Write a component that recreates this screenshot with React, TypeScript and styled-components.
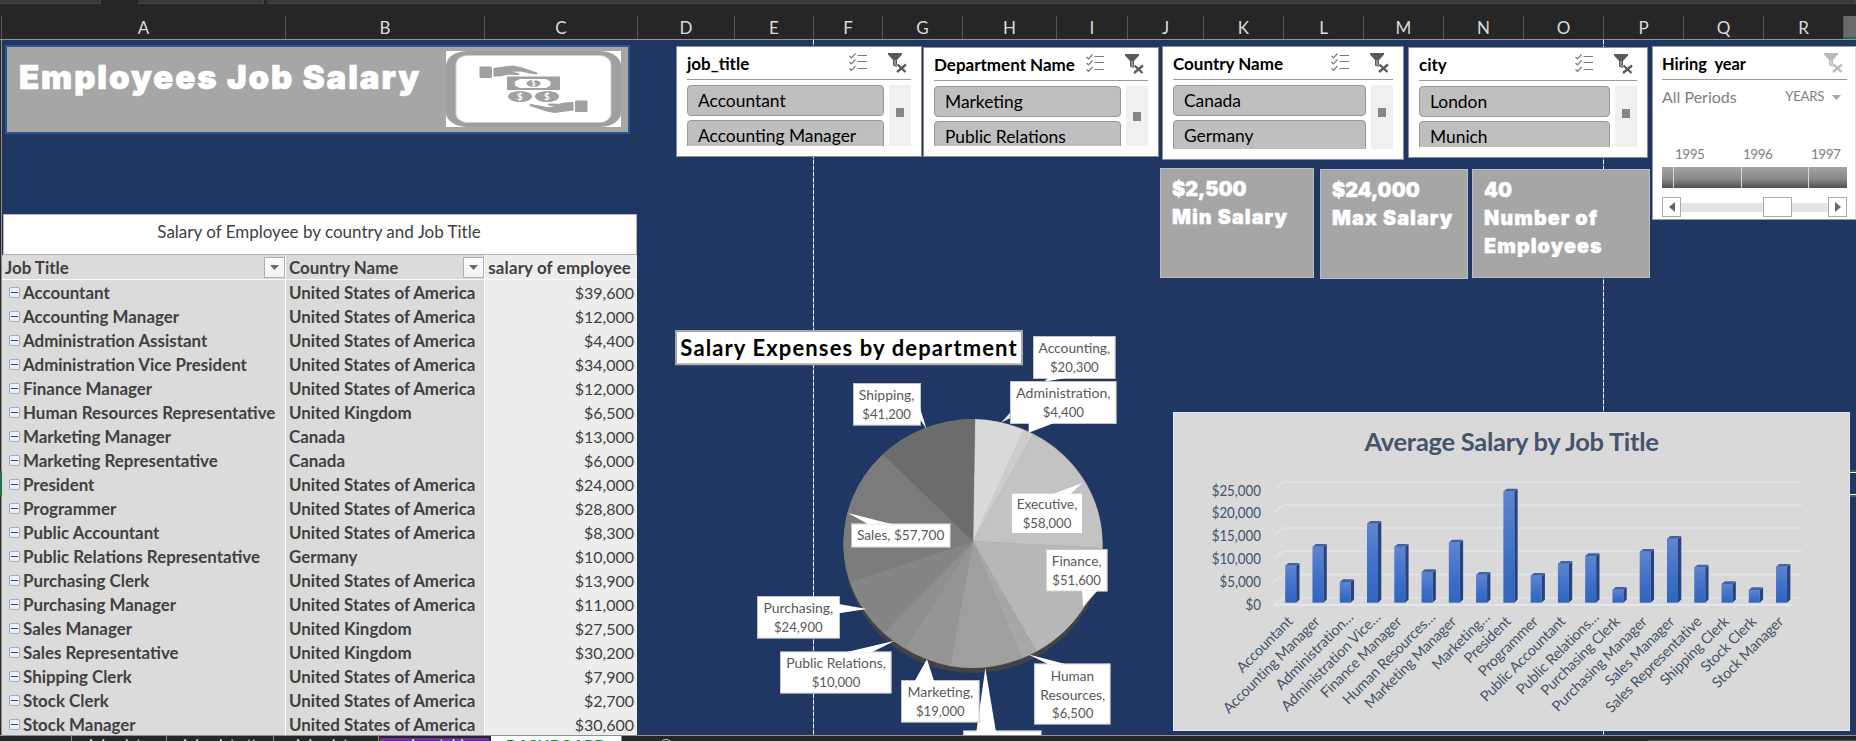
import React from "react";
import styled, { createGlobalStyle } from "styled-components";

const Global = createGlobalStyle`
  * { box-sizing: border-box; }
  html, body { margin: 0; padding: 0; background: #262626; overflow: hidden; }
  body { font-family: Lato, Carlito, "Liberation Sans", sans-serif; }
`;

const heavy = `Inter, "Liberation Sans", sans-serif`;

const Window = styled.div`
  width: 1856px; height: 741px; display: flex; flex-direction: column;
  background: #262626; overflow: hidden;
`;
const Ribbon = styled.div`
  height: 16px; flex: none; display: flex; align-items: flex-start;
`;
const RibbonPiece = styled.div<{ $w?: number; $gap: number }>`
  height: 4px; background: #383838; border-bottom: 1px solid #464646; border-right: 1px solid #464646;
  margin-right: ${p => p.$gap}px;
  ${p => (p.$w ? `width: ${p.$w}px;` : "flex: 1;")}
`;
const ColumnHeads = styled.div`
  height: 24px; flex: none; display: flex; border-bottom: 1px solid #929297; padding-left: 1px;
`;
const ColumnHead = styled.div<{ $w: number; $active?: boolean }>`
  width: ${p => p.$w}px; flex: none; display: flex; align-items: center; justify-content: center;
  border-left: 1px solid #55555a; color: #dcdcdc; font-size: 17px; line-height: 23px;
  ${p => p.$active && "background: #6a6a6a; border-bottom: 2px solid #217346;"}
`;
const Sheet = styled.div`
  position: relative; height: 695px; flex: none; display: flex; background: #203764; overflow: hidden;
`;
const RowHeads = styled.div`
  width: 2px; flex: none; background: #262626; border-right: 1px solid #8f8f94; padding-top: 431px;
`;
const ActiveRow = styled.div`width: 2px; height: 25px; background: #217346;`;
const PageBreak = styled.div<{ $x: number }>`
  position: absolute; top: 0; bottom: 0; left: ${p => p.$x}px; width: 1px;
  background: repeating-linear-gradient(180deg, #f2f2f2 0 4px, #7c89a3 4px 6px);
`;
const LeftColumn = styled.div`width: 636px; flex: none; display: flex; flex-direction: column;`;
const Banner = styled.div`
  margin: 5px 0 0 3px; width: 625px; height: 89px; flex: none; border: 2px solid #2f5597; background: #a6a6a6;
  display: flex; justify-content: space-between; padding: 4px 7px 0 12px;
`;
const BannerTitle = styled.h1`
  margin: 4px 0 0; width: 0; font: 900 33px/44px ${heavy}; color: #fff; letter-spacing: 1.9px; white-space: nowrap;
  -webkit-text-stroke: 0.7px #fff;
`;
const TableTitle = styled.div`
  margin: 80px 0 0 1px; width: 634px; height: 41px; flex: none; background: #fff; border: 1px solid #b5b5b5;
  text-align: center; color: #404040; font-size: 17px; line-height: 34px; padding-right: 2px;
`;
const Table = styled.div`
  display: grid; grid-template-columns: 284px 199px 152px; grid-template-rows: 25px; grid-auto-rows: 24px;
`;
const Cell = styled.div<{ $head?: boolean; $value?: boolean }>`
  display: flex; align-items: center; white-space: nowrap;
  color: #404040; font-size: ${p => (p.$value && !p.$head ? 16 : 16.9)}px;
  font-weight: ${p => (p.$value && !p.$head ? 400 : 700)};
  letter-spacing: ${p => (p.$value && p.$head ? 0.15 : 0)}px;
  background: ${p => (p.$value ? "#ededed" : "#dbdbdb")};
  border-right: ${p => (p.$value ? "none" : "1px solid #fff")};
  border-bottom: ${p => (p.$head ? "1px solid #fafafa" : "none")};
  justify-content: ${p => (p.$value ? "flex-end" : p.$head ? "space-between" : "flex-start")};
  padding: ${p => (p.$head ? 1 : 0)}px ${p => (p.$head && !p.$value ? 0 : p.$head ? 6 : 3)}px 0 3px;
`;
const DropButton = styled.span`
  width: 21px; height: 21px; border: 1px solid #aab0ba; background: linear-gradient(#fff, #f0f2f5);
  display: flex; align-items: center; justify-content: center;
`;
const Collapse = styled.span`
  width: 11px; height: 11px; margin: 0 3px 0 4px; flex: none; border: 1px solid #9aaac8; border-radius: 2px;
  background: #eef2f7; display: flex; align-items: center; justify-content: center;
  &::after { content: ""; width: 7px; height: 1px; background: #2d4a80; }
`;
const MiddleColumn = styled.div`
  position: relative; width: 522px; flex: none; display: flex; flex-direction: column;
`;
const SlicerRow = styled.div<{ $left: number; $gap: number; $h?: number }>`
  display: flex; align-items: flex-start; gap: ${p => p.$gap}px; padding: 6px 0 0 ${p => p.$left}px; flex: none;
  height: ${p => p.$h ?? 124}px;
`;
const SlicerPanel = styled.section<{ $w: number; $h: number; $drop: number }>`
  width: ${p => p.$w}px; height: ${p => p.$h}px; margin-top: ${p => p.$drop}px; flex: none; background: #fff;
  border: 1px solid #8c8c8c; padding: 0 10px 10px; display: flex; flex-direction: column;
`;
const PanelHead = styled.header<{ $size?: number }>`
  height: 33px; flex: none; display: flex; align-items: center; border-bottom: 1px solid #9a9a9a;
  color: #000; font-weight: 700; font-size: ${p => p.$size ?? 17}px; white-space: nowrap;
  & > span { flex: 1; width: 0; }
`;
const PanelIcons = styled.div`
  display: flex; gap: 20px; padding: 0 4px 0 0; flex: none;
`;
const SlicerBody = styled.div`
  flex: 1; min-height: 0; margin-top: 5px; display: flex; justify-content: space-between; overflow: hidden;
`;
const SlicerItems = styled.div`flex: 1; display: flex; flex-direction: column; gap: 4px; overflow: hidden;`;
const SlicerItem = styled.div`
  height: 31px; flex: none; border: 1px solid #979797; border-radius: 4px; background: #bfbfbf;
  padding-left: 10px; font-size: 17.4px; line-height: 30px; color: #000; white-space: nowrap;
`;
const SlicerScroll = styled.div<{ $thumb: number }>`
  width: 22px; margin-left: 5px; flex: none; background: #f0f0f0; padding: ${p => p.$thumb}px 0 0 7px;
  &::after { content: ""; display: block; width: 8px; height: 9px; background: #868686; }
`;
const RightColumn = styled.div`
  position: relative; width: 696px; flex: none; display: flex; flex-direction: column;
`;
const Upper = styled.div`display: flex; height: 372px; flex: none;`;
const Stack = styled.div`width: 490px; flex: none; display: flex; flex-direction: column;`;
const Cards = styled.div`display: flex; align-items: flex-start; padding-top: 4px;`;
const Card = styled.div<{ $w: number; $h: number; $drop: number; $gap: number; $pad: number }>`
  width: ${p => p.$w}px; height: ${p => p.$h}px; margin: ${p => p.$drop}px ${p => p.$gap}px 0 0; flex: none;
  background: #a6a6a6; border: 1px solid #b9bcc2; padding: 6px 0 0 ${p => p.$pad}px;
  color: #fff; font: 900 19.8px/28px ${heavy}; letter-spacing: 1.05px; white-space: nowrap;
  -webkit-text-stroke: 0.4px #fff;
`;
const CardValue = styled.div`letter-spacing: 0;`;
const Timeline = styled.section`
  width: 204px; height: 174px; margin: 6px 0 0 2px; flex: none; background: #fff; border: 1px solid #9b9b9b;
  border-right-color: #dedede; padding: 0 8px 0 9px; display: flex; flex-direction: column;
`;
const Period = styled.div`
  display: flex; align-items: center; color: #808080; font-size: 16px; height: 33px; flex: none; padding-bottom: 1px;
  & > b { margin-left: auto; font-size: 13.2px; font-weight: 400; letter-spacing: -0.3px; }
  & > svg { margin: 3px 6px 0 8px; }
`;
const Years = styled.div`
  margin-top: 28px; height: 24px; display: flex; gap: 40px; padding-left: 13px; font-size: 13.5px; line-height: 26px;
  color: #808080; letter-spacing: -0.5px; flex: none;
  & > span { width: 28px; white-space: nowrap; }
`;
const YearBar = styled.div`
  display: grid; grid-template-columns: 12px 68px 67px 38px; height: 21px; margin-top: 2px; flex: none;
  background: linear-gradient(#a2a2a2, #8a8a8a 55%, #505050);
  & > i { border-right: 1px solid #d8d8d8; } & > i:last-child { border: 0; }
`;
const Scrubber = styled.div`display: flex; align-items: center; margin-top: 9px; height: 20px; flex: none;`;
const Knob = styled.div<{ $w: number }>`
  width: ${p => p.$w}px; height: 20px; background: #fff; border: 1px solid #ababab; flex: none;
  display: flex; align-items: center; justify-content: center;
`;
const Track = styled.div<{ $w: number }>`width: ${p => p.$w}px; height: 9px; background: #e4e4e4; flex: none;`;
const BarPanel = styled.section`
  width: 677px; height: 319px; margin-left: 13px; flex: none; background: #d9d9d9; border: 1px solid #e4e8ee;
`;
const BarTitle = styled.h2`
  margin: 0; height: 60px; font-size: 25.5px; line-height: 57px; text-align: center; color: #44546a; font-weight: 700;
  letter-spacing: -0.28px;
`;
const RightEdge = styled.div`
  position: absolute; left: 1850px; top: 430px; width: 6px; height: 27px;
  border: solid #217346; border-width: 2px 0; box-shadow: inset 0 1px #fff, inset 0 -1px #fff;
`;
const TabBar = styled.footer`
  height: 6px; flex: none; display: flex; overflow: hidden; border-top: 1px solid #8f8f94;
`;
const Tab = styled.div<{ $w: number; $kind?: "accent" | "open" }>`
  width: ${p => p.$w}px; height: 24px; flex: none; border-right: 1px solid #8a8a8a; font-size: 15px; line-height: 17px;
  text-align: center; white-space: nowrap; color: #e8e8e8;
  ${p => p.$kind === "accent" && "background: #7030a0; border: solid #262626; border-width: 2px 2px 0 1px; line-height: 13px;"}
  ${p => p.$kind === "open" && "background: #fff; color: #217346; font-weight: 700; font-size: 16px; line-height: 17px;"}
`;
const AddTab = styled.div`width: 14px; height: 14px; margin: 3px 0 0 37px; border: 1.5px solid #c8c8c8; border-radius: 50%;`;
const HScroll = styled.div`margin: 4px 0 0 auto; width: 208px; height: 10px; background: #5a5a5a;`;

const columns: [string, number][] = [
  ["A", 284], ["B", 199], ["C", 153], ["D", 97], ["E", 79], ["F", 69], ["G", 80], ["H", 94], ["I", 71],
  ["J", 76], ["K", 80], ["L", 80], ["M", 80], ["N", 80], ["O", 80], ["P", 80], ["Q", 80], ["R", 80],
];

const US = "United States of America";
const UK = "United Kingdom";
const rows: [string, string, string][] = [
  ["Accountant", US, "$39,600"], ["Accounting Manager", US, "$12,000"], ["Administration Assistant", US, "$4,400"],
  ["Administration Vice President", US, "$34,000"], ["Finance Manager", US, "$12,000"],
  ["Human Resources Representative", UK, "$6,500"], ["Marketing Manager", "Canada", "$13,000"],
  ["Marketing Representative", "Canada", "$6,000"], ["President", US, "$24,000"], ["Programmer", US, "$28,800"],
  ["Public Accountant", US, "$8,300"], ["Public Relations Representative", "Germany", "$10,000"],
  ["Purchasing Clerk", US, "$13,900"], ["Purchasing Manager", US, "$11,000"], ["Sales Manager", UK, "$27,500"],
  ["Sales Representative", UK, "$30,200"], ["Shipping Clerk", US, "$7,900"], ["Stock Clerk", US, "$2,700"],
  ["Stock Manager", US, "$30,600"],
];

const Caret = ({ color = "#6b6b6b", w = 9 }: { color?: string; w?: number }) => (
  <svg width={w} height="5" viewBox="0 0 9 5"><path d="M0 0h9L4.5 5z" fill={color} /></svg>
);

const ListIcon = () => (
  <svg width="19" height="19" viewBox="0 0 19 19" fill="none" stroke="#7a7a7a" strokeWidth="1.2">
    <path d="M.5 3l2 2L6.500.5M.5 9l2 2 4-4.500M.5 15.500l2 2 4-4.500M8.500 2.500H18M8.500 8.500H18M8.500 15.500H18" />
  </svg>
);
const FilterIcon = ({ color = "#595959" }: { color?: string }) => (
  <svg width="19" height="20" viewBox="0 0 19 20">
    <path d="M0 0h14v1.500L9 7v7l-4-1.500V7L0 1.500z" fill={color} />
    <path d="M6.500 7v5l1 .4V7z" fill="#fff" opacity=".7" />
    <path d="M9.500 11l8 8M18 11l-9 8" stroke="#fff" strokeWidth="4" />
    <path d="M9.500 11.500l8 7.500M18 11.500L9 19" stroke={color} strokeWidth="2.300" />
  </svg>
);

function Slicer(p: { title: string; items: string[]; w: number; h: number; drop: number; thumb: number }) {
  return (
    <SlicerPanel $w={p.w} $h={p.h} $drop={p.drop}>
      <PanelHead><span>{p.title}</span><PanelIcons><ListIcon /><FilterIcon /></PanelIcons></PanelHead>
      <SlicerBody>
        <SlicerItems>{p.items.map(i => <SlicerItem key={i}>{i}</SlicerItem>)}</SlicerItems>
        <SlicerScroll $thumb={p.thumb} />
      </SlicerBody>
    </SlicerPanel>
  );
}

const Emblem = () => (
  <svg width="175" height="76" viewBox="0 0 175 76">
    <rect width="175" height="76" fill="#fff" />
    <rect width="175" height="76" rx="22" ry="14" fill="#a0a0a0" />
    <rect x="10" y="4.500" width="155" height="67" rx="11" ry="9" fill="#fff" stroke="#cfcfcf" />
    <g fill="#a0a0a0">
      <rect x="33.500" y="15.500" width="12.500" height="11.500" rx="1" />
      <path d="M47.500 17l19-2.500 8 1.500 16.500 5.500q1.500 1.500-1 2l-16-3-8 .2 7 1.600q1 1.500-1 1.700l-10-.3-7 1.500-7.500.3z" />
      <path d="M61 25.500h53v13.500H61zM69 30.500v4l5 2.500h26l4.500-2.500v-4l-4.500-2.500H74z" fillRule="evenodd" />
      <ellipse cx="87.500" cy="32.500" rx="7" ry="3.400" />
      <ellipse cx="74" cy="45.500" rx="12" ry="5.500" /><ellipse cx="101" cy="45.500" rx="12" ry="5.500" />
      <rect x="129" y="49.500" width="12.500" height="11.500" rx="1" />
      <path d="M127.500 59.500l-19 2.500-8-1.500-16.500-5.500q-1.500-1.500 1-2l16 3 8-.2-7-1.600q-1-1.500 1-1.700l10 .3 7-1.500 7.500-.3z" />
    </g>
    <g fill="#fff" fontWeight="700" textAnchor="middle" fontFamily="Lato, sans-serif">
      <text x="74" y="49" fontSize="10">$</text><text x="101" y="49" fontSize="10">$</text>
      <text x="87.500" y="35" fontSize="7">$</text>
    </g>
  </svg>
);

/* Pie wedge boundaries, clockwise from the top, in thirds of a pixel. */
const rim: [number, number][] = [
  [945, 328], [1091, 360], [1119, 373], [1327, 713], [1129, 1024], [1085, 1045],
  [870, 1068], [737, 1013], [673, 969], [570, 817], [670, 434],
];
const shades = ["#d9d9d9", "#cdcdcd", "#c3c3c3", "#b7b7b7", "#a7a7a7", "#9f9f9f", "#959595", "#8f8f8f", "#858585", "#7b7b7b", "#6c6c6c"];

type Callout = { x: number; y: number; w: number; h: number; tail: string; lines: [string, number, number, number][] };
const callouts: Callout[] = [
  { x: 1119, y: 78, w: 248, h: 129, tail: "1165,203 1222,203 1152,215", lines: [["Accounting,", 1243, 129, 215], ["$20,300", 1243, 186, 146]] },
  { x: 1050, y: 213, w: 320, h: 129, tail: "1106,339 1182,339 1106,368", lines: [["Administration,", 1210, 264, 283], ["$4,400", 1210, 321, 124]] },
  { x: 1053, y: 548, w: 216, h: 124, tail: "1180,551 1232,551 1266,520", lines: [["Executive,", 1161, 597, 182], ["$58,000", 1161, 654, 146]] },
  { x: 1157, y: 717, w: 186, h: 128, tail: "1266,842 1312,842 1270,890", lines: [["Finance,", 1250, 768, 150], ["$51,600", 1250, 825, 146]] },
  { x: 909, y: 1261, w: 236, h: 90, tail: "949,1266 1008,1266 976,1074", lines: [] },
  { x: 1122, y: 1060, w: 230, h: 184, tail: "1165,1063 1218,1063 1104,1033", lines: [["Human", 1237, 1113, 130], ["Resources,", 1238, 1170, 195], ["$6,500", 1238, 1225, 124]] },
  { x: 723, y: 1110, w: 236, h: 128, tail: "764,1113 822,1113 801,1048", lines: [["Marketing,", 841, 1161, 197], ["$19,000", 841, 1218, 146]] },
  { x: 360, y: 1024, w: 335, h: 127, tail: "558,1027 636,1027 704,992", lines: [["Public Relations,", 528, 1074, 299], ["$10,000", 528, 1131, 146]] },
  { x: 291, y: 858, w: 249, h: 128, tail: "537,882 537,910 620,897", lines: [["Purchasing,", 415, 909, 209], ["$24,900", 415, 966, 146]] },
  { x: 573, y: 640, w: 299, h: 73, tail: "625,643 697,643 564,609", lines: [["Sales, $57,700", 722, 690, 262]] },
  { x: 579, y: 219, w: 204, h: 128, tail: "780,295 780,328 800,358", lines: [["Shipping,", 680, 270, 167], ["$41,200", 680, 327, 146]] },
];

const PieSvg = styled.svg`margin-left: 22px; flex: none;`;

const PieChart = () => (
  <PieSvg width="500" height="425" viewBox="0 18 1500 1275">
    <rect x="48" y="63" width="1038" height="100" fill="#fff" stroke="#a6a6a6" strokeWidth="6" />
    <text x="61" y="139" fontSize="66" fontWeight="700" textLength="1009" lengthAdjust="spacing">Salary Expenses by department</text>
    <ellipse cx="939" cy="716" rx="388" ry="373" fill="#434343" />
    <ellipse cx="939" cy="700" rx="388.500" ry="372" fill="#8a8a8a" />
    {rim.map(([x, y], i) => {
      const [nx, ny] = rim[(i + 1) % rim.length];
      return <path key={i} d={`M939 694L${x} ${y}A388.500 372 0 0 1 ${nx} ${ny}z`} fill={shades[i]} stroke={shades[i]} />;
    })}
    <polygon points="1050,308 1050,325 1023,338" fill="#e4e4e4" />
    {callouts.map((c, i) => (
      <g key={i}>
        <rect x={c.x + 1.5} y={c.y + 1.5} width={c.w - 3} height={c.h - 3} fill="#fff" stroke="#c4c4c4" strokeWidth="3" />
        <polygon points={c.tail} fill="#fff" />
        {c.lines.map(([t, x, y, w]) => (
          <text key={t} x={x - w / 2} y={y} fontSize="39" fill="#595959" textLength={w} lengthAdjust="spacingAndGlyphs">{t}</text>
        ))}
      </g>
    ))}
  </PieSvg>
);

/* Bar heights in pixels above the chart floor, with the tick label beneath each bar. */
const bars: [string, number][] = [
  ["Accountant", 37], ["Accounting Manager", 56], ["Administration…", 20.7], ["Administration Vice…", 79], ["Finance Manager", 56],
  ["Human Resources…", 30.7], ["Marketing Manager", 60.3], ["Marketing…", 28], ["President", 111.3], ["Programmer", 27],
  ["Public Accountant", 39], ["Public Relations…", 46.7], ["Purchasing Clerk", 13], ["Purchasing Manager", 51],
  ["Sales Manager", 64], ["Sales Representative", 35.3], ["Shipping Clerk", 18.7], ["Stock Clerk", 12.7], ["Stock Manager", 36],
];

const BarPlot = () => (
  <svg width="675" height="257" viewBox="1174 473 675 257">
    <defs>
      <linearGradient id="face" x1="0" y1="0" x2="0" y2="1">
        <stop offset="0" stopColor="#6084cf" /><stop offset=".6" stopColor="#3d6fca" /><stop offset="1" stopColor="#3265bd" />
      </linearGradient>
    </defs>
    {[482, 505, 528, 551.3, 574.5, 597.7].map((y, i) => (
      <g key={y}>
        <path d={`M1274 ${y + 7.3}L1283.400 ${y}H1802`} fill="none" stroke="#e0e5ec" strokeWidth="1.400" />
        <text x="1261" y={[495.5, 517.5, 540.5, 563.5, 586.5, 609.5][i]} textAnchor="end" fontSize="15" fill="#44546a"
          textLength={[49.3, 49.3, 49.3, 49.3, 41.5, 15.5][i]} lengthAdjust="spacingAndGlyphs">
          {["$25,000", "$20,000", "$15,000", "$10,000", "$5,000", "$0"][i]}
        </text>
      </g>
    ))}
    <path d="M1274 605H1793" stroke="#e2e7ee" strokeWidth="1.800" />
    {bars.map(([label, h], i) => {
      const x = 1285.2 + i * 27.27;
      const cut = label.endsWith("…");
      return (
        <g key={label}>
          <rect x={x} y={602.7 - h} width="11" height={h} fill="url(#face)" />
          <path d={`M${x + 11} ${602.7 - h}l3.300-2.500V599.5l-3.300 3.200z`} fill="#27437f" />
          <path d={`M${x} ${602.7 - h}l3.300-2.700h11l-3.300 2.700z`} fill="#4262a3" />
          <text transform={`translate(${x + (cut ? 14.500 : 8.300)} ${cut ? 618 : 622.5}) rotate(-45)`} textAnchor="end"
            fontSize="14.600" letterSpacing="-0.15" fill="#44546a">{label}</text>
        </g>
      );
    })}
  </svg>
);

export default function App() {
  return (
    <Window>
      <Global />
      <Ribbon><RibbonPiece $w={101} $gap={37} /><RibbonPiece $w={126} $gap={3} /><RibbonPiece $gap={0} /></Ribbon>
      <ColumnHeads>
        {columns.map(([n, w]) => <ColumnHead key={n} $w={w}>{n}</ColumnHead>)}
        <ColumnHead $w={14} $active />
      </ColumnHeads>
      <Sheet>
        <PageBreak $x={813} /><PageBreak $x={1603} />
        <RowHeads><ActiveRow /></RowHeads>
        <LeftColumn>
          <Banner><BannerTitle>Employees Job Salary</BannerTitle><Emblem /></Banner>
          <TableTitle>Salary of Employee by country and Job Title</TableTitle>
          <Table>
            <Cell $head>Job Title<DropButton><Caret /></DropButton></Cell>
            <Cell $head>Country Name<DropButton><Caret /></DropButton></Cell>
            <Cell $head $value>salary of employee</Cell>
            {rows.map(([job, country, pay]) => (
              <React.Fragment key={job}>
                <Cell><Collapse />{job}</Cell><Cell>{country}</Cell><Cell $value>{pay}</Cell>
              </React.Fragment>
            ))}
          </Table>
        </LeftColumn>
        <MiddleColumn>
          <SlicerRow $left={38} $gap={1} $h={276}>
            <Slicer title="job_title" items={["Accountant", "Accounting Manager"]} w={246} h={111} drop={0} thumb={23} />
            <Slicer title="Department Name" items={["Marketing", "Public Relations"]} w={236} h={110} drop={1} thumb={26} />
          </SlicerRow>
          <PieChart />
        </MiddleColumn>
        <RightColumn>
          <Upper>
            <Stack>
              <SlicerRow $left={2} $gap={4}>
                <Slicer title="Country Name" items={["Canada", "Germany"]} w={242} h={114} drop={0} thumb={23} />
                <Slicer title="city" items={["London", "Munich"]} w={240} h={111} drop={1} thumb={23} />
              </SlicerRow>
              <Cards>
                <Card $w={154} $h={110} $drop={0} $gap={6} $pad={11}><CardValue>$2,500</CardValue>Min Salary</Card>
                <Card $w={148} $h={110} $drop={1} $gap={4} $pad={11}><CardValue>$24,000</CardValue>Max Salary</Card>
                <Card $w={178} $h={109} $drop={1} $gap={0} $pad={11}><CardValue>40</CardValue>Number of<br />Employees</Card>
              </Cards>
            </Stack>
            <Timeline>
              <PanelHead $size={16.4}><span>Hiring&nbsp; year</span><PanelIcons><FilterIcon color="#b9b9b9" /></PanelIcons></PanelHead>
              <Period>All Periods<b>YEARS</b><Caret color="#a6a6a6" /></Period>
              <Years><span>1995</span><span>1996</span><span>1997</span></Years>
              <YearBar><i /><i /><i /><i /></YearBar>
              <Scrubber>
                <Knob $w={19}><svg width="6" height="10"><path d="M6 0v10L0 5z" fill="#666" /></svg></Knob>
                <Track $w={82} /><Knob $w={29} /><Track $w={36} />
                <Knob $w={19}><svg width="6" height="10"><path d="M0 0v10l6-5z" fill="#666" /></svg></Knob>
              </Scrubber>
            </Timeline>
          </Upper>
          <BarPanel><BarTitle>Average Salary by Job Title</BarTitle><BarPlot /></BarPanel>
        </RightColumn>
        <RightEdge />
      </Sheet>
      <TabBar>
        <Tab $w={72} /><Tab $w={95}>jobs data</Tab><Tab $w={107}>jobs data tt</Tab><Tab $w={105}>jobs data</Tab>
        <Tab $w={112} $kind="accent">salary table</Tab><Tab $w={131} $kind="open">DASHBOARD</Tab>
        <AddTab /><HScroll />
      </TabBar>
    </Window>
  );
}
